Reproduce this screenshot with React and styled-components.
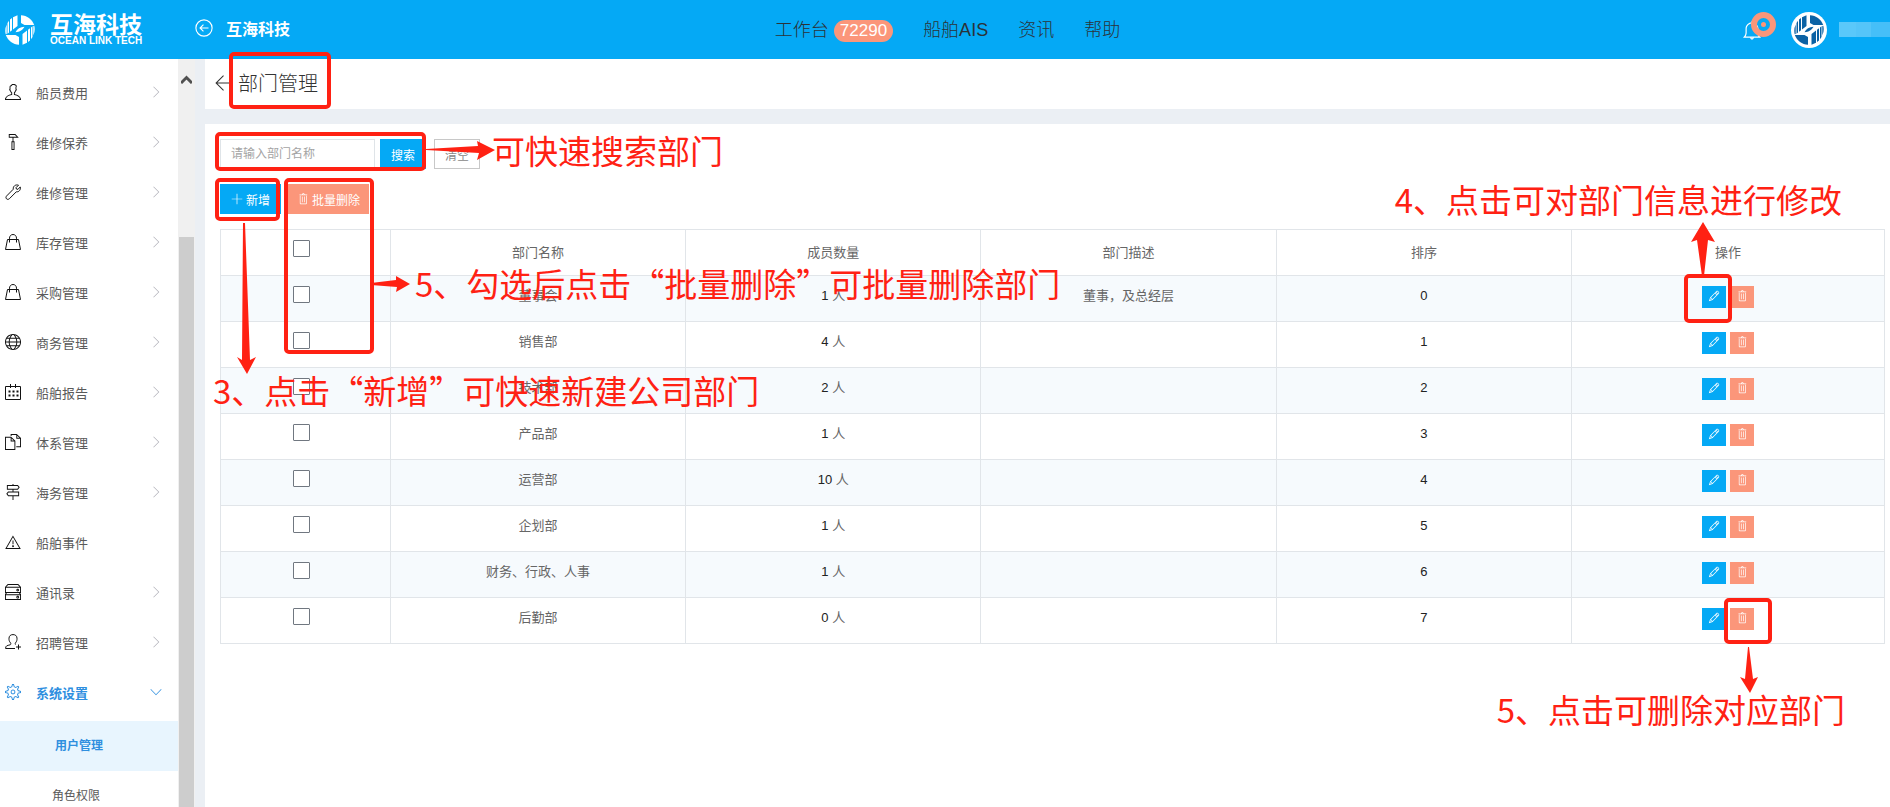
import React from "react";
import styled, { createGlobalStyle, css } from "styled-components";
import {
  TfiAlert,
  TfiAngleDown,
  TfiAngleRight,
  TfiArrowLeft,
  TfiBell,
  TfiDirectionAlt,
  TfiFiles,
  TfiHarddrives,
  TfiHummer,
  TfiPencil,
  TfiPlus,
  TfiSettings,
  TfiTrash,
  TfiUser,
  TfiWorld,
} from "react-icons/tfi";

const BLUE = "#05a9f5";
const SALMON = "#fb967a";
const RED = "#ff2113";

const GlobalStyle = createGlobalStyle`
  * {
    box-sizing: border-box;
  }

  body {
    margin: 0;
    background: #ebeff4;
    color: #666;
    font-family: "Liberation Sans", "Noto Sans CJK SC", sans-serif;
    font-size: 13px;
  }

  button,
  input {
    font: inherit;
  }

  a {
    color: inherit;
    text-decoration: none;
  }
`;

const Page = styled.div`
  position: relative;
  display: flex;
  flex-direction: column;
  height: 100vh;
  overflow: hidden;
`;

const Header = styled.header`
  display: grid;
  grid-template-columns: 1fr auto 1fr;
  align-items: center;
  flex: none;
  height: 59px;
  background: ${BLUE};
  color: white;
`;

const HeaderLeft = styled.div`
  display: flex;
  align-items: center;
  padding-left: 5px;
`;

const Brand = styled.a`
  display: flex;
  align-items: center;
  gap: 15px;
  width: 190px;
`;

const BrandText = styled.span`
  display: flex;
  flex-direction: column;
  padding-bottom: 2px;
  font-weight: 700;
`;

const BrandName = styled.span`
  font-size: 23px;
  line-height: 24px;
`;

const BrandSub = styled.span`
  font-size: 10px;
  line-height: 8px;
`;

const Company = styled.a`
  display: flex;
  align-items: center;
  gap: 13px;
  padding-bottom: 3px;
  font-size: 16px;
  font-weight: 700;
`;

const TopNav = styled.nav`
  display: flex;
  align-items: center;
  gap: 30px;
  padding: 0 0 3px 5px;
  color: #2b3238;
  font-size: 18px;
  font-weight: 300;
`;

const TopLink = styled.a`
  display: flex;
  align-items: center;
  gap: 5px;
`;

const Count = styled.span`
  margin-top: 5px;
  padding: 0 6px;
  border-radius: 11px;
  background: ${SALMON};
  color: white;
  font-size: 17px;
  line-height: 22px;
`;

const HeaderRight = styled.div`
  display: flex;
  align-items: center;
  justify-content: flex-end;
`;

const BellButton = styled.button`
  position: relative;
  display: flex;
  margin-right: 29px;
  padding: 0;
  border: 0;
  background: none;
  color: white;
  font-size: 20px;
`;

const BellRing = styled.svg`
  position: absolute;
  top: -8px;
  left: 9px;
`;

const UserName = styled.span`
  display: flex;
  margin-left: 12px;
`;

const NameBlock = styled.span`
  width: ${(props) => props.$width}px;
  height: 15px;
  background: ${(props) => props.$color};
`;

const Body = styled.div`
  display: flex;
  flex: 1;
  min-height: 0;
`;

const Sidebar = styled.nav`
  flex: none;
  width: 178px;
  padding-top: 8px;
  overflow: hidden;
  background: white;
`;

const Menu = styled.ul`
  margin: 0;
  padding: 0;
  list-style: none;
`;

const MenuLink = styled.a`
  display: flex;
  align-items: center;
  height: 50px;
  padding: 0 16px 0 5px;
  color: ${(props) => (props.$active ? "#2f8fdf" : "#5a5a5a")};
  font-weight: ${(props) => (props.$active ? 700 : 400)};
`;

const MenuIcon = styled.span`
  display: flex;
  width: 31px;
  color: ${(props) => (props.$active ? "#2f8fdf" : "#111")};
  font-size: 16px;
`;

const MenuText = styled.span`
  flex: 1;
`;

const MenuArrow = styled.span`
  display: flex;
  color: ${(props) => (props.$active ? "#2f8fdf" : "#b4b4bc")};
  font-size: 12px;
`;

const SubMenu = styled(Menu)`
  padding-top: 4px;
`;

const SubLink = styled.a`
  display: block;
  padding-left: ${(props) => (props.$active ? 55 : 52)}px;
  background: ${(props) => (props.$active ? "#e8f5fe" : "white")};
  color: ${(props) => (props.$active ? "#2f8fdf" : "#5a5a5a")};
  font-size: 12px;
  font-weight: ${(props) => (props.$active ? 700 : 400)};
  line-height: 50px;
`;

const Scrollbar = styled.div`
  display: flex;
  flex: none;
  flex-direction: column;
  align-items: center;
  width: 17px;
  background: #f0f0f0;
`;

const ScrollUp = styled.svg`
  flex: none;
  margin: 16px 0 153px;
`;

const ScrollThumb = styled.div`
  flex: 1;
  width: 15px;
  background: #cdcdcd;
`;

const Main = styled.main`
  display: flex;
  flex: 1;
  flex-direction: column;
  gap: 15px;
  min-width: 0;
  padding-left: 10px;
`;

const TitleBar = styled.div`
  display: flex;
  align-items: center;
  gap: 6px;
  flex: none;
  height: 50px;
  padding: 0 9px 3px;
  background: white;
  color: #333;
`;

const BackLink = styled.a`
  display: flex;
  font-size: 18px;
`;

const Title = styled.h1`
  margin: 0;
  font-size: 20px;
  font-weight: 300;
`;

const Card = styled.section`
  flex: 1;
  padding: 15px 5px 15px 15px;
  background: white;
`;

const SearchForm = styled.form`
  display: flex;
  margin-bottom: 15px;
  font-size: 12px;
`;

const SearchInput = styled.input`
  width: 155px;
  height: 30px;
  margin-right: 5px;
  padding: 0 10px;
  border: 1px solid #dfe4e8;

  &::placeholder {
    color: #a4a4a4;
  }
`;

const Button = styled.button`
  display: flex;
  align-items: center;
  justify-content: center;
  gap: 3px;
  height: 30px;
  padding: 0 11px;
  border: 0;
  background: ${BLUE};
  color: white;
  font-size: 12px;
`;

const ClearButton = styled(Button)`
  margin-left: 8px;
  border: 1px solid #c8c8c8;
  padding: 0 10px;
  background: white;
  color: #888;
`;

const DeleteButton = styled(Button)`
  padding: 0 9px;
  background: ${SALMON};
`;

const Actions = styled.div`
  display: flex;
  gap: 7px;
  margin-bottom: 15px;
`;

const Table = styled.table`
  width: 100%;
  table-layout: fixed;
  border-collapse: collapse;
  text-align: center;
  line-height: 20px;
`;

const cell = css`
  height: 46px;
  padding: 10px 8px;
  border: 1px solid #e1e5e9;
`;

const Th = styled.th`
  ${cell}
  width: ${(props) => props.$width};
  font-weight: 400;
`;

const Td = styled.td`
  ${cell}
  vertical-align: top;
`;

const CheckTh = styled(Th)`
  padding-right: 15px;
  vertical-align: top;
`;

const CheckTd = styled(Td)`
  padding-right: 15px;
`;

const Row = styled.tr`
  &:nth-child(odd) {
    background: #f6fafd;
  }
`;

const Checkbox = styled.input.attrs({ type: "checkbox" })`
  display: block;
  width: 17px;
  height: 17px;
  margin: 0 auto;
  border: 1px solid #707780;
  border-radius: 1px;
  background: white;
  appearance: none;

  &:checked {
    background: ${BLUE};
  }
`;

const Number = styled.span`
  color: #222;
`;

const RowActions = styled.div`
  display: flex;
  justify-content: center;
  gap: 4px;
`;

const IconButton = styled.button`
  display: flex;
  justify-content: center;
  width: 24px;
  height: 22px;
  padding: 4px 0 0;
  border: 0;
  background: ${(props) => props.$color};
  color: white;
  font-size: 12px;
`;

// Guide marks drawn over the page
const pinned = css`
  position: absolute;
  top: ${(props) => props.$top}px;
  left: ${(props) => (props.$left === undefined ? "auto" : `${props.$left}px`)};
  right: ${(props) => (props.$right === undefined ? "auto" : `${props.$right}px`)};
  pointer-events: none;
`;

const Frame = styled.div`
  ${pinned}
  width: ${(props) => props.$width}px;
  height: ${(props) => props.$height}px;
  border: 4px solid ${RED};
  border-radius: 5px;
`;

const Note = styled.p`
  ${pinned}
  margin: 0;
  color: ${RED};
  font-family: "Noto Sans CJK SC", sans-serif;
  font-size: 33px;
  line-height: 40px;
  white-space: nowrap;
`;

const ArrowSvg = styled.svg`
  ${pinned}
  fill: ${RED};
`;

function Arrow({ width, height, points, ...place }) {
  return (
    <ArrowSvg width={width} height={height} aria-hidden="true" {...place}>
      <polygon points={points} />
    </ArrowSvg>
  );
}

function Logo({ size, color }) {
  return (
    <svg width={size} height={size} viewBox="0 0 30 30" aria-hidden="true">
      <g fill={color}>
        <path d="M12.500 .3V11L8 14.500V2.200zM7 2.900v12.300l-2 1.500V4.600zM4 5.800v11.700l-1.500 1.200V8zM1.700 9.500v9.400l-1 .4A15 15 0 0 1 1.700 9.500z" />
        <path d="M16 .2c6 .3 11 4 13.200 9.800h-9.700L16 8z" />
        <path d="M10.500 17.200c1.500-3.200 4.800-5.300 9-5.400-1.500 3-4.800 5.300-9 5.400z" />
        <path d="M17.500 29.700V19l4.500-3.500v12.300zM23 27.100V14.800l2-1.500v12.100zM26 24.200V12.500l1.500-1.200V22zM28.300 20.500v-9.400l1-.4a15 15 0 0 1-1 9.800z" />
        <path d="M14 29.800C8 29.500 3 25.800.8 20h9.700l3.500 2z" />
      </g>
    </svg>
  );
}

function LineIcon({ size = 16, children }) {
  return (
    <svg width={size} height={size} viewBox="0 0 16 16" fill="none" stroke="currentColor" aria-hidden="true">
      {children}
    </svg>
  );
}

function CircleLeftIcon() {
  return (
    <LineIcon size={18}>
      <circle cx="8" cy="8" r="7.200" />
      <path d="M12 8H4.500M7.500 5l-3 3 3 3" />
    </LineIcon>
  );
}

function WrenchIcon() {
  return (
    <LineIcon>
      <path d="M13.500 1.200 11 3.700l.4 1.300 1.500.4 2.400-2.500c.6 2.500-1 5.300-4 4.900L4.500 14.600c-1 1-2.300 1-3 .2-.8-.8-.7-2 .2-2.900l6.600-6.700C7.800 2.300 10.500.2 13.500 1.200z" />
    </LineIcon>
  );
}

function BagIcon() {
  return (
    <LineIcon>
      <path d="M2.500 5.500h11l2 10H.500zM4.500 8.500V4.200C4.500 2 6 .5 8 .5s3.500 1.500 3.500 3.700v4.300" />
    </LineIcon>
  );
}

function CalendarIcon() {
  return (
    <LineIcon>
      <path d="M.5 2.500h15v13H.5zM5.500 0v4M10.500 0v4" />
      <path d="M3.500 7.500h10M3.500 11.500h10" strokeWidth="2" strokeDasharray="2 2" />
    </LineIcon>
  );
}

function UserPlusIcon() {
  return (
    <LineIcon>
      <path d="M10 14.500H.6c0-3 1.500-2.800 4.600-3.700.8-.3.800-1.300.3-1.900C4.200 7.300 3.900 6 4 4.200 4.100 1.800 5.700.6 8 .6s3.900 1.200 4 3.600c.1 1.800-.2 3.100-1.500 4.700-.4.600-.4 1.500.2 1.800" />
      <path d="M13.500 10.500v5M11 13h5" />
    </LineIcon>
  );
}

const menu = [
  { label: "船员费用", icon: TfiUser },
  { label: "维修保养", icon: TfiHummer },
  { label: "维修管理", icon: WrenchIcon },
  { label: "库存管理", icon: BagIcon },
  { label: "采购管理", icon: BagIcon },
  { label: "商务管理", icon: TfiWorld },
  { label: "船舶报告", icon: CalendarIcon },
  { label: "体系管理", icon: TfiFiles },
  { label: "海务管理", icon: TfiDirectionAlt },
  { label: "船舶事件", icon: TfiAlert, leaf: true },
  { label: "通讯录", icon: TfiHarddrives },
  { label: "招聘管理", icon: UserPlusIcon },
  { label: "系统设置", icon: TfiSettings, active: true },
];

const departments = [
  { name: "董事会", members: 1, description: "董事，及总经层" },
  { name: "销售部", members: 4 },
  { name: "技术部", members: 2 },
  { name: "产品部", members: 1 },
  { name: "运营部", members: 10 },
  { name: "企划部", members: 1 },
  { name: "财务、行政、人事", members: 1 },
  { name: "后勤部", members: 0 },
];

function MenuItem({ label, icon: Icon, active, leaf }) {
  return (
    <li>
      <MenuLink href="#" $active={active}>
        <MenuIcon $active={active}>
          <Icon />
        </MenuIcon>
        <MenuText>{label}</MenuText>
        {!leaf && (
          <MenuArrow $active={active}>
            {active ? <TfiAngleDown /> : <TfiAngleRight />}
          </MenuArrow>
        )}
      </MenuLink>
    </li>
  );
}

function DepartmentRow({ name, members, description, order }) {
  return (
    <Row>
      <CheckTd>
        <Checkbox aria-label={name} />
      </CheckTd>
      <Td>{name}</Td>
      <Td>
        <Number>{members}</Number> 人
      </Td>
      <Td>{description}</Td>
      <Td>
        <Number>{order}</Number>
      </Td>
      <Td>
        <RowActions>
          <IconButton $color={BLUE} aria-label="修改">
            <TfiPencil />
          </IconButton>
          <IconButton $color={SALMON} aria-label="删除">
            <TfiTrash />
          </IconButton>
        </RowActions>
      </Td>
    </Row>
  );
}

function Guide() {
  return (
    <>
      <Frame $top={52} $left={229} $width={102} $height={57} />
      <Frame $top={132} $left={215} $width={211} $height={39} />
      <Frame $top={178} $left={215} $width={65} $height={43} />
      <Frame $top={178} $left={284} $width={90} $height={176} />
      <Frame $top={274} $right={158} $width={48} $height={49} />
      <Frame $top={598} $right={118} $width={48} $height={46} />

      <Arrow $top={141} $left={426} width={69} height={19} points="0,8 52,5 51,0 69,9 51,19 53,12 0,9" />
      <Arrow $top={276} $left={371} width={39} height={16} points="0,7 25,4 25,0 39,8 25,16 26,11 0,9" />
      <Arrow $top={223} $left={237} width={19} height={151} points="6,0 8,0 13,137 19,134 10,151 0,134 5,137" />
      <Arrow $top={222} $right={175} width={24} height={54} points="12,0 24,20 17,18 13,54 11,54 6,18 0,20" />
      <Arrow $top={647} $right={132} width={18} height={46} points="8,0 9,0 13,32 18,30 10,46 0,30 5,32" />

      <Note $top={130} $left={492}>可快速搜索部门</Note>
      <Note $top={263} $left={415}>5、勾选后点击“批量删除”可批量删除部门</Note>
      <Note $top={370} $left={213}>3、点击“新增”可快速新建公司部门</Note>
      <Note $top={179} $right={48}>4、点击可对部门信息进行修改</Note>
      <Note $top={689} $right={45}>5、点击可删除对应部门</Note>
    </>
  );
}

function App() {
  return (
    <Page>
      <GlobalStyle />
      <Header>
        <HeaderLeft>
          <Brand href="#">
            <Logo size={30} color="white" />
            <BrandText>
              <BrandName>互海科技</BrandName>
              <BrandSub>OCEAN LINK TECH</BrandSub>
            </BrandText>
          </Brand>
          <Company href="#">
            <CircleLeftIcon />
            互海科技
          </Company>
        </HeaderLeft>
        <TopNav>
          <TopLink href="#">
            工作台 <Count>72290</Count>
          </TopLink>
          <TopLink href="#">船舶AIS</TopLink>
          <TopLink href="#">资讯</TopLink>
          <TopLink href="#">帮助</TopLink>
        </TopNav>
        <HeaderRight>
          <BellButton aria-label="通知">
            <TfiBell />
            <BellRing width="25" height="25" viewBox="0 0 25 25">
              <circle cx="12.500" cy="12.500" r="9.500" fill="none" stroke={SALMON} strokeWidth="6" />
              <circle cx="12.500" cy="12.500" r="2.500" fill={SALMON} />
            </BellRing>
          </BellButton>
          <svg width="36" height="36" viewBox="0 0 36 36" aria-hidden="true">
            <circle cx="18" cy="18" r="18" fill="white" />
            <g transform="translate(3 3)">
              <Logo size={30} color="#0b62a4" />
            </g>
          </svg>
          <UserName>
            <NameBlock $width={17} $color="#5ac8fa" />
            <NameBlock $width={15} $color="#55c5f9" />
            <NameBlock $width={19} $color="#46bff8" />
          </UserName>
        </HeaderRight>
      </Header>

      <Body>
        <Sidebar>
          <Menu>
            {menu.map((item) => (
              <MenuItem key={item.label} {...item} />
            ))}
          </Menu>
          <SubMenu>
            <li>
              <SubLink href="#" $active>
                用户管理
              </SubLink>
            </li>
            <li>
              <SubLink href="#">角色权限</SubLink>
            </li>
          </SubMenu>
        </Sidebar>
        <Scrollbar>
          <ScrollUp width="11" height="9" viewBox="0 0 11 9" fill="none" stroke="#505050" strokeWidth="3">
            <path d="M0 8 5.500 2.500 11 8" />
          </ScrollUp>
          <ScrollThumb />
        </Scrollbar>

        <Main>
          <TitleBar>
            <BackLink href="#" aria-label="返回">
              <TfiArrowLeft />
            </BackLink>
            <Title>部门管理</Title>
          </TitleBar>
          <Card>
            <SearchForm onSubmit={(e) => e.preventDefault()}>
              <SearchInput placeholder="请输入部门名称" aria-label="部门名称" />
              <Button type="submit">搜索</Button>
              <ClearButton type="reset">清空</ClearButton>
            </SearchForm>
            <Actions>
              <Button>
                <TfiPlus />
                新增
              </Button>
              <DeleteButton>
                <TfiTrash />
                批量删除
              </DeleteButton>
            </Actions>
            <Table>
              <thead>
                <tr>
                  <CheckTh $width="10.2%">
                    <Checkbox aria-label="全选" />
                  </CheckTh>
                  <Th $width="17.75%">部门名称</Th>
                  <Th $width="17.75%">成员数量</Th>
                  <Th $width="17.75%">部门描述</Th>
                  <Th $width="17.75%">排序</Th>
                  <Th>操作</Th>
                </tr>
              </thead>
              <tbody>
                {departments.map((item, index) => (
                  <DepartmentRow key={item.name} order={index} {...item} />
                ))}
              </tbody>
            </Table>
          </Card>
        </Main>
      </Body>

      <Guide />
    </Page>
  );
}

export default App;
